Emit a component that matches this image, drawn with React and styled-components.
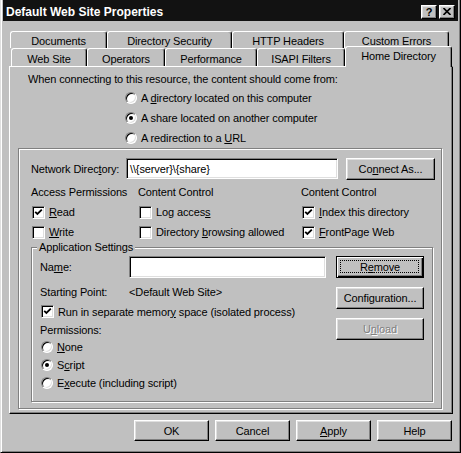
import React from 'react';
import styled, { createGlobalStyle, css } from 'styled-components';

const face = '#c0c0c0';
const shadow = '#808080';
const light = '#dfdfdf';

const GlobalStyle = createGlobalStyle`
  html, body {
    margin: 0;
    padding: 0;
    background: ${face};
  }
  body {
    font-family: "Liberation Sans", Arial, sans-serif;
    font-size: 11px;
    letter-spacing: -0.12px;
    color: #000;
  }
`;

// Outer dialog frame
const Window = styled.div`
  box-sizing: border-box;
  width: 461px;
  height: 453px;
  background: ${face};
  border: 1px solid;
  border-top: 0;
  border-color: ${light} #000 #000 ${light};
  box-shadow: inset 1px 0 #fff, inset -1px -1px ${shadow};
  padding: 0 2px 2px 2px;
  display: flex;
  flex-direction: column;
`;

const TitleBar = styled.div`
  box-sizing: border-box;
  height: 21px;
  background: #121212;
  color: #fff;
  display: flex;
  align-items: center;
  padding: 2px 3px 0 3px;
`;

const TitleText = styled.span`
  flex: 1;
  font-weight: bold;
  font-size: 12px;
  letter-spacing: 0;
`;

const TitleButton = styled.div`
  box-sizing: border-box;
  width: 16px;
  height: 14px;
  margin-left: ${(p) => p.$gap || 0}px;
  background: ${face};
  border: 1px solid;
  border-color: #fff #000 #000 #fff;
  box-shadow: inset -1px -1px ${shadow}, inset 1px 1px ${light};
  display: flex;
  align-items: center;
  justify-content: center;
  color: #000;
  font-weight: bold;
  font-size: 11px;
  line-height: 12px;
`;

// Tabs
const TabControl = styled.div`
  margin: 10px 0 0 6px;
  display: flex;
  flex-direction: column;
`;

const TabRow = styled.div`
  display: flex;
  height: ${(p) => (p.$front ? 18 : 17)}px;
  padding-left: ${(p) => (p.$front ? 2 : 1)}px;
`;

const Tab = styled.div`
  box-sizing: border-box;
  width: ${(p) => p.$w}px;
  height: 100%;
  background: ${face};
  border-top: 1px solid #fff;
  border-left: 1px solid #fff;
  border-right: 1px solid #000;
  box-shadow: inset -1px 0 ${shadow};
  border-radius: 3px 3px 0 0;
  display: flex;
  justify-content: center;
  align-items: center;
  padding-top: 2px;
  white-space: nowrap;
  ${(p) =>
    p.$active &&
    css`
      position: relative;
      z-index: 1;
      height: 21px;
      margin-top: -2px;
      padding-top: 0;
      padding-bottom: 2px;
    `}
`;

const Panel = styled.div`
  box-sizing: border-box;
  width: 444px;
  height: 348px;
  background: ${face};
  border: 1px solid;
  border-color: #fff #000 #000 #fff;
  box-shadow: inset -1px -1px ${shadow};
  padding-top: 6px;
`;

const Intro = styled.div`
  margin-left: 18px;
  line-height: 13px;
  white-space: nowrap;
`;

const SourceList = styled.div`
  margin: 2px 0 0 115px;
`;

const OptionRow = styled.div`
  display: flex;
  align-items: center;
  height: ${(p) => p.$h || 20}px;
  white-space: nowrap;
`;

const Radio = styled.span`
  box-sizing: border-box;
  width: 12px;
  height: 12px;
  margin: 0 4px 0 ${(p) => p.$ml || 0}px;
  border-radius: 50%;
  background: #fff;
  border: 1px solid;
  border-color: ${shadow} #fff #fff ${shadow};
  box-shadow: inset 1px 1px #000, inset -1px -1px ${light};
  display: flex;
  align-items: center;
  justify-content: center;
  flex-shrink: 0;
  &::after {
    content: '';
    width: 4px;
    height: 4px;
    border-radius: 50%;
    background: #000;
    display: ${(p) => (p.$on ? 'block' : 'none')};
  }
`;

const CheckBox = styled.span`
  box-sizing: border-box;
  width: 13px;
  height: 13px;
  margin: 0 4px 0 1px;
  background: #fff;
  border: 1px solid;
  border-color: ${shadow} #fff #fff ${shadow};
  box-shadow: inset 1px 1px #000, inset -1px -1px ${light};
  display: flex;
  align-items: center;
  justify-content: center;
  flex-shrink: 0;
`;

const etched = css`
  border: 1px solid ${shadow};
  box-shadow: inset 1px 1px #fff, 1px 1px #fff;
`;

const Frame = styled.div`
  ${etched};
  margin: 0 10px 0 8px;
  padding: 8px 6px 6px 12px;
`;

const NetRow = styled.div`
  display: flex;
  align-items: center;
  height: 23px;
`;

const FieldLabel = styled.span`
  width: ${(p) => p.$w}px;
  flex-shrink: 0;
  white-space: nowrap;
`;

const TextField = styled.div`
  box-sizing: border-box;
  width: ${(p) => p.$w}px;
  height: ${(p) => p.$h}px;
  background: #fff;
  border: 1px solid;
  border-color: ${shadow} #fff #fff ${shadow};
  box-shadow: inset 1px 1px #000, inset -1px -1px ${light};
  padding: 0 3px;
  display: flex;
  align-items: center;
  white-space: nowrap;
`;

const Button = styled.div`
  position: relative;
  box-sizing: border-box;
  width: ${(p) => p.$w || 75}px;
  height: ${(p) => p.$h || 21}px;
  margin-left: ${(p) => p.$ml || 0}px;
  flex-shrink: 0;
  background: ${face};
  border: 1px solid;
  border-color: #fff #000 #000 #fff;
  box-shadow: inset -1px -1px ${shadow}, inset 1px 1px ${light};
  display: flex;
  align-items: center;
  justify-content: center;
  white-space: nowrap;
  ${(p) =>
    p.$default &&
    css`
      border-color: #000;
      box-shadow: inset 1px 1px #fff, inset -1px -1px #000, inset -2px -2px ${shadow};
    `}
  ${(p) =>
    p.$disabled &&
    css`
      color: ${shadow};
      text-shadow: 1px 1px #fff;
    `}
`;

const FocusRing = styled.span`
  position: absolute;
  inset: 3px 4px 4px 3px;
  border: 1px dotted #000;
`;

const PermGrid = styled.div`
  display: grid;
  grid-template-columns: 107px 163px 1fr;
  grid-template-rows: 16px 20px 20px;
  margin-top: 6px;
`;

const ColHead = styled.div`
  line-height: 13px;
  white-space: nowrap;
`;

const Group = styled.div`
  ${etched};
  position: relative;
  margin: 5px 2px 0 0;
  padding: 8px 8px 9px 8px;
  display: flex;
  gap: 10px;
`;

const GroupLegend = styled.span`
  position: absolute;
  top: -7px;
  left: 5px;
  padding: 0 2px;
  background: ${face};
  line-height: 13px;
`;

const GroupLeft = styled.div`
  width: 286px;
  display: flex;
  flex-direction: column;
`;

const NameRow = styled.div`
  display: flex;
  align-items: center;
  height: 22px;
  margin-bottom: 4px;
`;

const ButtonColumn = styled.div`
  display: flex;
  flex-direction: column;
  gap: 9px;
`;

const Footer = styled.div`
  display: flex;
  justify-content: flex-end;
  gap: 6px;
  margin-top: 6px;
  padding-right: 6px;
`;

const Check = () => (
  <svg width="9" height="9" viewBox="0 0 9 9">
    <path d="M1.2 3.8 L3.4 6 L7.8 1.6" fill="none" stroke="#000" strokeWidth="1.8" />
  </svg>
);

const CloseGlyph = () => (
  <svg width="8" height="7" viewBox="0 0 8 7">
    <path d="M0.5 0 L7.5 7 M7.5 0 L0.5 7" stroke="#000" strokeWidth="1.6" />
  </svg>
);

const CheckOption = ({ on, children, h }) => (
  <OptionRow $h={h}>
    <CheckBox>{on && <Check />}</CheckBox>
    <span>{children}</span>
  </OptionRow>
);

const RadioOption = ({ on, children, h, ml }) => (
  <OptionRow $h={h}>
    <Radio $on={on} $ml={ml} />
    <span>{children}</span>
  </OptionRow>
);

const backTabs = [
  ['Documents', 97],
  ['Directory Security', 125],
  ['HTTP Headers', 112],
  ['Custom Errors', 105],
];

const frontTabs = [
  ['Web Site', 76],
  ['Operators', 78],
  ['Performance', 92],
  ['ISAPI Filters', 88],
];

const App = () => {
  return (
    <>
      <GlobalStyle />
      <Window>
        <TitleBar>
          <TitleText>Default Web Site Properties</TitleText>
          <TitleButton>?</TitleButton>
          <TitleButton $gap={2}>
            <CloseGlyph />
          </TitleButton>
        </TitleBar>

        <TabControl>
          <TabRow>
            {backTabs.map(([label, w]) => (
              <Tab key={label} $w={w}>
                {label}
              </Tab>
            ))}
          </TabRow>
          <TabRow $front>
            {frontTabs.map(([label, w]) => (
              <Tab key={label} $w={w}>
                {label}
              </Tab>
            ))}
            <Tab $w={107} $active>
              Home Directory
            </Tab>
          </TabRow>

          <Panel>
            <Intro>When connecting to this resource, the content should come from:</Intro>
            <SourceList>
              <RadioOption>
                A <u>d</u>irectory located on this computer
              </RadioOption>
              <RadioOption on>A share located on another computer</RadioOption>
              <RadioOption>
                A redirection to a <u>U</u>RL
              </RadioOption>
            </SourceList>

            <Frame>
              <NetRow>
                <FieldLabel $w={95}>
                  Network Direc<u>t</u>ory:
                </FieldLabel>
                <TextField $w={212} $h={21}>
                  {'\\\\{server}\\{share}'}
                </TextField>
                <Button $w={89} $h={22} $ml={8}>
                  Co<u>n</u>nect As...
                </Button>
              </NetRow>

              <PermGrid>
                <ColHead>Access Permissions</ColHead>
                <ColHead>Content Control</ColHead>
                <ColHead>Content Control</ColHead>
                <CheckOption on>
                  <u>R</u>ead
                </CheckOption>
                <CheckOption>
                  Log acces<u>s</u>
                </CheckOption>
                <CheckOption on>
                  <u>I</u>ndex this directory
                </CheckOption>
                <CheckOption>
                  <u>W</u>rite
                </CheckOption>
                <CheckOption>
                  Directory <u>b</u>rowsing allowed
                </CheckOption>
                <CheckOption on>
                  <u>F</u>rontPage Web
                </CheckOption>
              </PermGrid>

              <Group>
                <GroupLegend>Application Settings</GroupLegend>
                <GroupLeft>
                  <NameRow>
                    <FieldLabel $w={89}>
                      Na<u>m</u>e:
                    </FieldLabel>
                    <TextField $w={197} $h={22} />
                  </NameRow>
                  <OptionRow $h={20}>
                    <FieldLabel $w={89}>Starting Point:</FieldLabel>
                    <span>&lt;Default Web Site&gt;</span>
                  </OptionRow>
                  <CheckOption on h={19}>
                    Run in separate memor<u>y</u> space (isolated process)
                  </CheckOption>
                  <OptionRow $h={17}>Permissions:</OptionRow>
                  <RadioOption h={18} ml={1}>
                    <u>N</u>one
                  </RadioOption>
                  <RadioOption on h={18} ml={1}>
                    S<u>c</u>ript
                  </RadioOption>
                  <RadioOption h={18} ml={1}>
                    E<u>x</u>ecute (including script)
                  </RadioOption>
                </GroupLeft>
                <ButtonColumn>
                  <Button $w={88} $h={22} $default>
                    <FocusRing />
                    R<u>e</u>move
                  </Button>
                  <Button $w={88} $h={22}>
                    Configuration...
                  </Button>
                  <Button $w={88} $h={22} $disabled>
                    U<u>n</u>load
                  </Button>
                </ButtonColumn>
              </Group>
            </Frame>
          </Panel>
        </TabControl>

        <Footer>
          <Button>OK</Button>
          <Button>Cancel</Button>
          <Button>
            <u>A</u>pply
          </Button>
          <Button>Help</Button>
        </Footer>
      </Window>
    </>
  );
};

export default App;
